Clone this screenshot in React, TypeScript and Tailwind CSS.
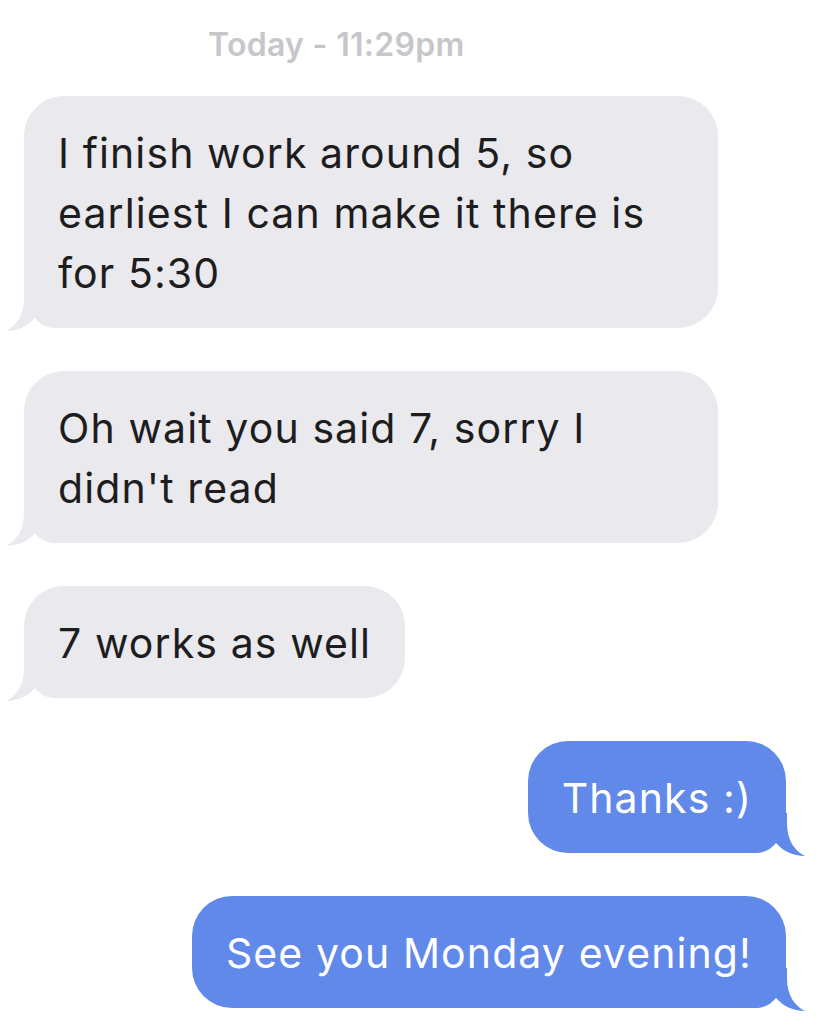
import React from 'react'

const messages = [
  { id: 1, from: 'them', text: 'I finish work around 5, so earliest I can make it there is for 5:30' },
  { id: 2, from: 'them', text: "Oh wait you said 7, sorry I didn't read" },
  { id: 3, from: 'them', text: '7 works as well' },
  { id: 4, from: 'me', text: 'Thanks :)' },
  { id: 5, from: 'me', text: 'See you Monday evening!' },
]

function Tail({ color, mine }: { color: string; mine: boolean }) {
  return (
    <svg
      width="58"
      height="46"
      viewBox="0 0 58 46"
      className={mine ? 'absolute right-[-19px] bottom-[-3px] -scale-x-100' : 'absolute left-[-18px] bottom-[-3px]'}
    >
      <path
        d="M18 3 L18 13 C18 31 10 41 0 46 C12 46 22 41 29 33 C34 39 40 43 50 43 L58 43 L58 3 Z"
        fill={color}
      />
    </svg>
  )
}

export default function App() {
  return (
    <div className="w-[816px] h-[1024px] bg-white overflow-hidden pt-[26px] font-['Inter','Liberation_Sans',sans-serif]">
      <div className="pl-[208px] text-[32px] leading-[38px] font-semibold text-[#c6c6cb] tracking-[0.3px]">
        Today - 11:29pm
      </div>

      <div className="mt-[32px] flex flex-col gap-[43px]">
        {messages.map(m => {
          const mine = m.from === 'me'
          const color = mine ? '#6089e9' : '#e9e9ee'
          return (
            <div
              key={m.id}
              className={
                mine
                  ? 'relative self-end mr-[30px] max-w-[694px] rounded-[40px] px-[34px] pt-[27px] pb-[25px] text-[41px] leading-[60px] tracking-[1.1px] text-white bg-[#6089e9]'
                  : 'relative self-start ml-[24px] max-w-[694px] rounded-[40px] px-[34px] pt-[27px] pb-[25px] text-[41px] leading-[60px] tracking-[1.1px] text-[#1d1d20] bg-[#e9e9ee]'
              }
            >
              {m.text}
              <Tail color={color} mine={mine} />
            </div>
          )
        })}
      </div>
    </div>
  )
}
